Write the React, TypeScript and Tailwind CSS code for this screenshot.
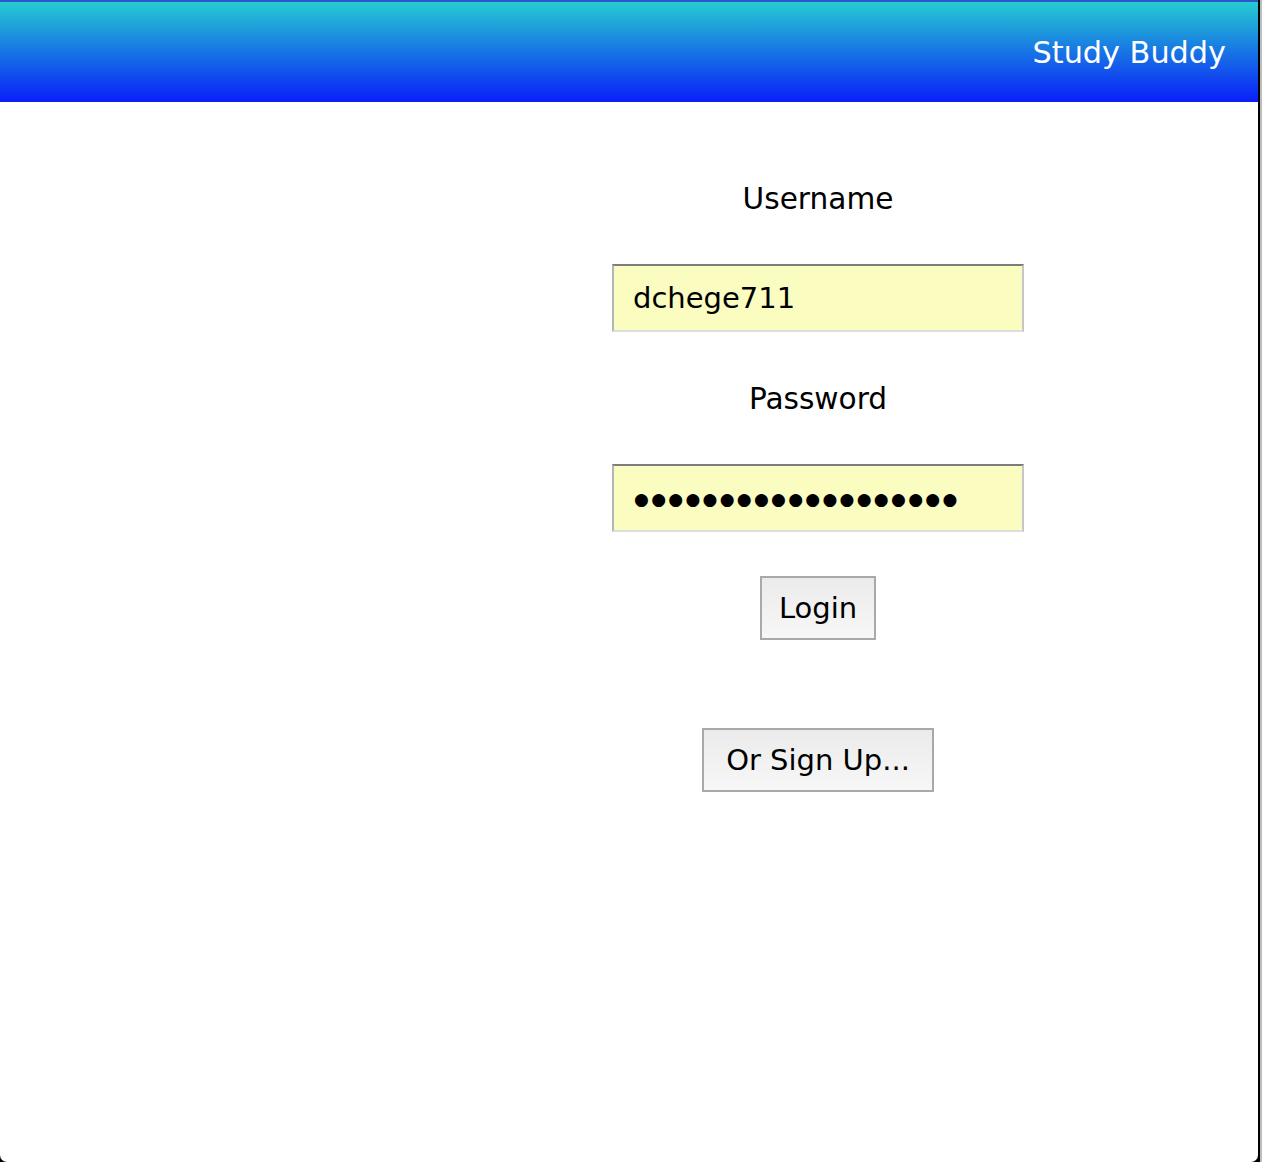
export default function App() {
  return (
    <div className="flex w-[1262px] h-[1162px] bg-black font-['DejaVu_Sans',Verdana,sans-serif]">
      <div className="flex flex-col w-[1258px] h-full bg-white rounded-b-[7px] overflow-hidden">
        {/* Header */}
        <header className="flex items-center justify-end h-[102px] border-t-2 border-[#2b58c9] bg-[linear-gradient(to_bottom,#25cbd1,#0a1ef9)] pr-[32px] pt-[3px]">
          <span className="text-white text-[30.3px] leading-none">Study Buddy</span>
        </header>

        {/* Login form */}
        <form className="flex flex-col items-center w-[412px] ml-[612px] pt-[80px] text-black text-[29px]">
          <label className="text-[29.6px] leading-[35px]">Username</label>
          <input
            readOnly
            value="dchege711"
            className="mt-[47px] w-[412px] h-[68px] pl-[19px] bg-[#fafcc0] border-2 border-t-[#7d7d7d] border-l-[#b5b5b5] border-r-[#c6c6c6] border-b-[#dedede] outline-none text-[29px]"
          />
          <label className="mt-[50px] text-[29.6px] leading-[35px]">Password</label>
          <input
            readOnly
            value={'\u25CF'.repeat(19)}
            className="mt-[47px] w-[412px] h-[68px] pl-[20px] pt-[2px] bg-[#fafcc0] border-2 border-t-[#7d7d7d] border-l-[#b5b5b5] border-r-[#c6c6c6] border-b-[#dedede] outline-none text-[17px] tracking-[2.3px]"
          />
          <button
            type="button"
            className="mt-[44px] h-[64px] px-[17px] border-2 border-[#a9a9a9] bg-[linear-gradient(to_bottom,#ebebeb,#f7f7f7)] leading-none"
          >
            Login
          </button>
          <button
            type="button"
            className="mt-[88px] h-[64px] px-[22px] border-2 border-[#a9a9a9] bg-[linear-gradient(to_bottom,#ebebeb,#f7f7f7)] leading-none"
          >
            Or Sign Up...
          </button>
        </form>
      </div>
      <div className="w-[2px] h-full bg-black" />
      <div className="w-[2px] h-full bg-[#bdbdbd]" />
    </div>
  );
}
